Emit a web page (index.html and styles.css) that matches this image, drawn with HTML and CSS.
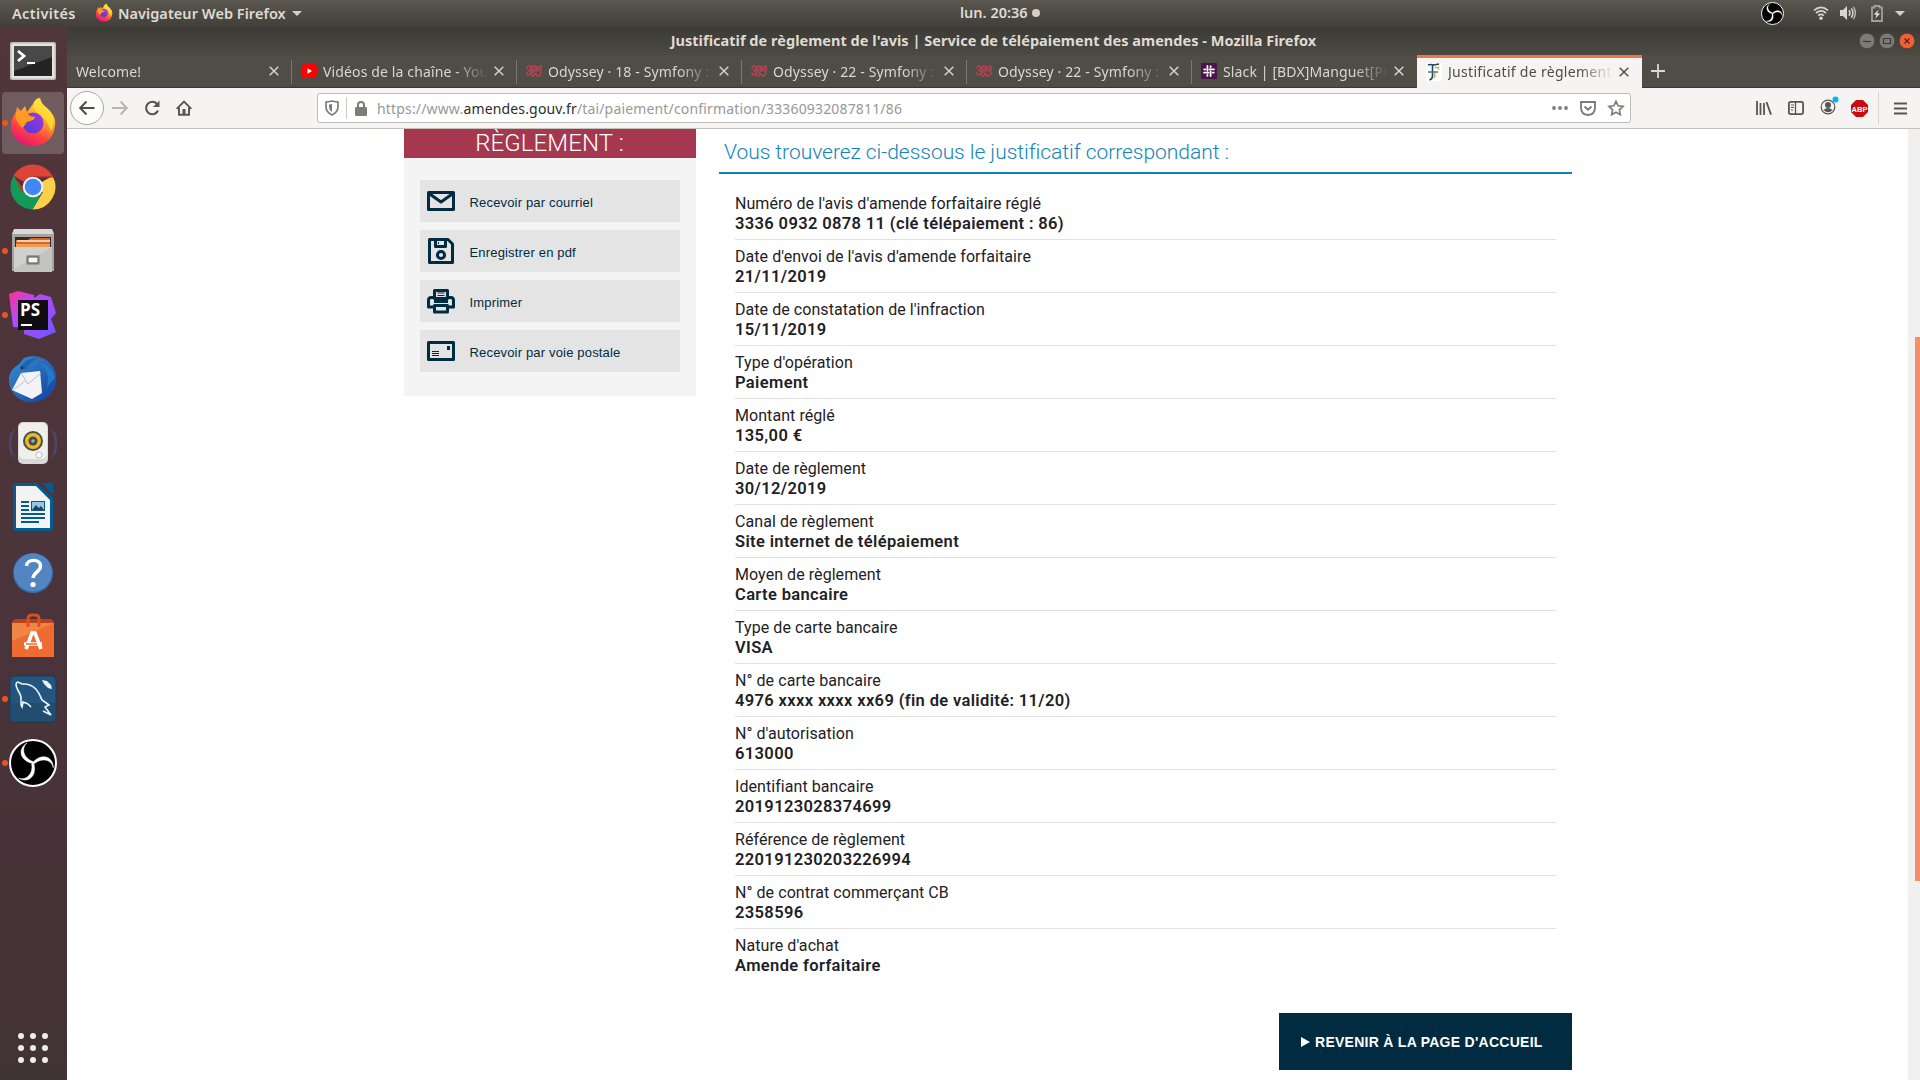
FILE: index.html
```html
<!DOCTYPE html>
<html lang="fr">
<head>
<meta charset="utf-8">
<title>Justificatif de règlement de l'avis</title>
<link rel="stylesheet" href="styles.css">
</head>
<body>
<header class="panel">
  <span class="activities">Activités</span>
  <svg class="panel-fox" width="18" height="18" viewBox="0 0 48 48"><use href="#fox"/></svg>
  <span class="appname">Navigateur Web Firefox</span>
  <span class="caret"></span>
  <span class="clock">lun. 20:36<i class="clock-dot"></i></span>
  <div class="tray">
    <svg width="23" height="23" viewBox="0 0 48 48"><use href="#obs"/></svg>
    <svg class="t-wifi" width="16" height="16" viewBox="0 0 16 16" fill="none" stroke="#d8d5cf" stroke-width="1.7"><path d="M1 5.4Q8-.8 15 5.4M3 8Q8 3.6 13 8M5.2 10.6Q8 8.2 10.8 10.6"/><circle cx="8" cy="13.3" r="1.700" fill="#d8d5cf" stroke="none"/></svg>
    <svg class="t-vol" width="16" height="16" viewBox="0 0 16 16" fill="none" stroke="#d8d5cf" stroke-width="1.500"><path d="M0 5h3l4-4v14l-4-4H0z" fill="#d8d5cf" stroke="none"/><path d="M9 5.2q2 2.8 0 5.6M11.3 3.4q3.2 4.6 0 9.2"/><path d="M13.4 1.8q4 6.2 0 12.4" stroke="#b5b2ab"/></svg>
    <svg class="t-bat" width="12" height="17" viewBox="0 0 12 17"><path d="M3.5 2.5V1h5v1.500h2.500V16H1V2.500z" fill="none" stroke="#a19e97" stroke-width="1.800"/><path d="M7.700 4.500 2.800 9.800h2.800l-1.400 4 5-5.300H6.300z" fill="#e5e3de"/></svg>
    <span class="caret"></span>
  </div>
</header>
<div class="desktop">
  <nav class="dock">
    <div class="app low"><svg width="48" height="48" viewBox="0 0 48 48"><rect x="1" y="5" width="46" height="38" rx="2" fill="#bcbcba"/><rect x="2.500" y="6.500" width="43" height="35" rx="1" fill="#e4e4e2"/><rect x="5" y="9" width="38" height="30" fill="#242424"/><path d="M5 9h38v11L5 34z" fill="#484848"/><path d="m9 14 6 5-6 5" fill="none" stroke="#fff" stroke-width="2.800"/><path d="M18 26h8" stroke="#fff" stroke-width="2"/></svg></div>
    <div class="app current run"><svg width="48" height="48" viewBox="0 0 48 48"><defs>
      <linearGradient id="gf" x1=".8" y1="0" x2=".3" y2="1"><stop offset="0" stop-color="#fff44f"/><stop offset=".4" stop-color="#ffa52a"/><stop offset=".7" stop-color="#ff453d"/><stop offset="1" stop-color="#e8127c"/></linearGradient>
      <linearGradient id="gp" x1="0" y1="1" x2="1" y2="0"><stop offset="0" stop-color="#4a3ad8"/><stop offset="1" stop-color="#a838e0"/></linearGradient>
      <g id="fox"><path d="M24 5c1-3 4-6 7-6 1 6 5 8 9 12 5 5 7 10 6 16-1 12-10 20-22 20S2 38 2 27c0-7 3-11 5-14l1-5 4 4 4-5 2 6z" fill="url(#gf)"/><path d="M31-1c1 6 5 8 9 12 5 5 6 15 2 21-3-8-6-13-12-17-4-3-7-8-5-11 1-2 3-5 6-5z" fill="#ffde36" opacity=".8"/><circle cx="24" cy="24" r="10.500" fill="url(#gp)"/><path d="M7 13c6-2 10-1 14 4l5 1c0 3-5 4-8 5-2 2-3 5-5 6-5-5-7-10-6-16z" fill="#ff9a23"/></g></defs><use href="#fox"/></svg></div>
    <div class="app"><svg width="48" height="48" viewBox="0 0 48 48"><path d="M24 24 4.500 12.800A22.500 22.500 0 0 1 43.500 13L24 13z" fill="#dc4437"/><path d="m24 24 19.500-11A22.500 22.500 0 0 1 23.500 46.500L34 29z" fill="#fdd04a"/><path d="M24 24 33 30 23.500 46.500A22.500 22.500 0 0 1 4.500 12.800L15 29z" fill="#129b58"/><path d="M24 13h19.500l.8 1.500H27zM4.500 12.800 14 30l2-3z" fill="#b9342e"/><circle cx="24" cy="24" r="10.300" fill="#f2f2f2"/><circle cx="24" cy="24" r="8.300" fill="#4285f4"/></svg></div>
    <div class="app run"><svg width="48" height="48" viewBox="0 0 48 48"><path d="M5 2h38l2 5H3z" fill="#d8d8d6"/><path d="M3 7h42v37H3z" fill="#a4a4a2"/><path d="M6 10h36v13H6z" fill="#322a27"/><path d="M7 13h12l3-2h19v10H7z" fill="#dc6428"/><path d="M8 14h33" stroke="#fff0d8" stroke-width="1.500"/><path d="M7 17h34v5H7z" fill="#f09b50"/><path d="M5 20h38v25H5z" fill="#c3c3c0"/><path d="M5 20h38L5 42z" fill="#d0d0cd"/><rect x="17" y="28" width="14" height="10" rx="2" fill="#999"/><rect x="19" y="30" width="10" height="6" fill="#f4f4f4" stroke="#555"/></svg></div>
    <div class="app run"><svg width="48" height="48" viewBox="0 0 48 48"><defs><linearGradient id="ps" x2="1" y2="1"><stop offset="0" stop-color="#ff318c"/><stop offset=".35" stop-color="#b74af7"/><stop offset="1" stop-color="#6b57ff"/></linearGradient></defs><path d="m0 3 9-3 16 4v3l6-4 11 3 5 16-5 6 5 13-17 7-15-5v-6L4 36z" fill="url(#ps)"/><path d="M9 9h30v30H9z" fill="#100e12"/><text x="11" y="25" class="ps-text">PS</text><path d="M12 34h11" stroke="#fff" stroke-width="2"/></svg></div>
    <div class="app"><svg width="48" height="48" viewBox="0 0 48 48"><defs><linearGradient id="tb" x2="1" y2="1"><stop offset="0" stop-color="#3b8fd4"/><stop offset="1" stop-color="#123e9c"/></linearGradient></defs><path d="M15 3C30-3 45 7 47 19c2 16-8 27-22 28C10 49-1 36 0 23 1 15 6 12 10 9z" fill="url(#tb)"/><path d="M29 8c8 5 12 12 9 24l8-9c-1-8-7-15-17-15z" fill="#2379c8"/><path d="m12 18 19-2 2 22-10 6-20-9z" fill="#f3f3f7"/><path d="m12 18 7 11 13-11M4 35l12-9" fill="none" stroke="#bbbdcb"/><path d="M11 12q6-9 18-9-9 4-12 12z" fill="#1f65ad"/><circle cx="13" cy="13" r="1.500" fill="#172f5c"/></svg></div>
    <div class="app"><svg width="48" height="48" viewBox="0 0 48 48"><path d="M5 10q-7 15 0 29M43 10q7 15 0 29M2 13q-3 11 0 22M46 13q3 11 0 22" fill="none" stroke="#4b4766" stroke-width="1.500"/><rect x="9" y="3" width="30" height="42" rx="5" fill="#d8d8d5"/><rect x="10" y="4" width="28" height="36" rx="5" fill="#efefec"/><circle cx="24" cy="22" r="10" fill="#4b4b49"/><circle cx="24" cy="22" r="8" fill="#e5bd29"/><circle cx="24" cy="22" r="4.500" fill="#4a4a48"/><circle cx="24" cy="22" r="1.800" fill="#aaa"/><circle cx="30" cy="36" r="3" fill="#fff" stroke="#bbb"/></svg></div>
    <div class="app"><svg width="48" height="48" viewBox="0 0 48 48"><path d="M4 2q0-2 2-2h22l16 15v31q0 2-2 2H6q-2 0-2-2z" fill="#045b91"/><path d="M7 3h20l14 14v28H7z" fill="#f3f3f1"/><path d="M33 0h9q2 0 2 2v10z" fill="#045b91"/><path d="M12 19h8M12 23h8M12 27h8M12 31h24M12 35h24M12 39h18" stroke="#045b91" stroke-width="1.800"/><rect x="22.500" y="18.500" width="13" height="9" fill="#8dc7ea" stroke="#045b91"/><path d="m23 27 4-5 3 3 2-2 3 4z" fill="#353c43"/></svg></div>
    <div class="app low"><svg width="48" height="48" viewBox="0 0 48 48"><circle cx="24" cy="24" r="20" fill="#356da7"/><circle cx="24" cy="23.500" r="19" fill="#5385c2"/><path d="M17.500 17c0-7 14-8 14 0 0 6-7 6-7.500 12" fill="none" stroke="#fff" stroke-width="3.400"/><circle cx="24" cy="35.500" r="2.600" fill="#fff"/></svg></div>
    <div class="app low"><svg width="48" height="48" viewBox="0 0 48 48"><path d="m3 9 3-3h36l3 3v6H3z" fill="#b94319"/><path d="M3 10h42v34H3z" fill="#ee6c31"/><path d="M3 10h42L3 28z" fill="#f08643"/><path d="M19 14V6q0-4 4-4h3q4 0 4 4v8" fill="none" stroke="#dc4f20" stroke-width="3"/><path d="m17 36 6-16h3l6 16M15 31h18" fill="none" stroke="#fff" stroke-width="3.600"/><path d="M17 31h11" stroke="#ed6b31" stroke-width="1.500"/></svg></div>
    <div class="app run"><svg width="48" height="48" viewBox="0 0 48 48"><rect x="1" y="1" width="46" height="46" rx="4" fill="#24557f" stroke="#173b59"/><path d="M1 28h46v15q0 4-4 4H5q-4 0-4-4z" fill="#204768" opacity=".6"/><path d="M22 32c-4-5-4-3-8-5l-1 5c-3-4 1-8-2-13C8 14 5 8 9 7l4 2c13-1 17 9 20 16l7 5-4 2 6 8-8-4" fill="none" stroke="#e7f5fc" stroke-width="1.600"/><path d="m33 5 5 1 4 4 1 4-4-1-4-4z" fill="#e7f5fc"/></svg></div>
    <div class="app run"><svg width="48" height="48" viewBox="0 0 48 48"><g id="obs"><circle cx="24" cy="24" r="23" fill="#020202" stroke="#fff" stroke-width="2"/><path id="blade" d="M18 4C12 9 14 19 24 22.500V24.500C11 22 8 10 18 4z" fill="#fff" stroke="#fff" stroke-width=".5"/><use href="#blade" transform="rotate(120 24 24)"/><use href="#blade" transform="rotate(240 24 24)"/></g></svg></div>
    <svg class="grid" width="32" height="32" viewBox="0 0 32 32" fill="#f0eeec"><circle cx="4" cy="4" r="3"/><circle cx="16" cy="4" r="3"/><circle cx="28" cy="4" r="3"/><circle cx="4" cy="16" r="3"/><circle cx="16" cy="16" r="3"/><circle cx="28" cy="16" r="3"/><circle cx="4" cy="28" r="3"/><circle cx="16" cy="28" r="3"/><circle cx="28" cy="28" r="3"/></svg>
  </nav>
  <div class="window">
    <div class="titlebar"><span class="wtitle">Justificatif de règlement de l'avis | Service de télépaiement des amendes - Mozilla Firefox</span>
      <div class="wbtns"><svg width="16" height="16" viewBox="0 0 16 16"><circle cx="8" cy="8" r="7.800" fill="#7c7a73" stroke="#3a3935" stroke-width=".6"/><path d="M4 8.500h8" stroke="#3b3a36" stroke-width="1.200"/></svg><svg width="16" height="16" viewBox="0 0 16 16"><circle cx="8" cy="8" r="7.800" fill="#7c7a73" stroke="#3a3935" stroke-width=".6"/><path d="M4.500 5.500h7v5h-7z" fill="none" stroke="#3b3a36" stroke-width="1.200"/></svg><svg width="16" height="16" viewBox="0 0 16 16"><circle cx="8" cy="8" r="7.800" fill="#ee6137" stroke="#3a3935" stroke-width=".6"/><path d="m5.500 5.500 5 5m0-5-5 5" stroke="#5a2411" stroke-width="1.300"/></svg></div>
    </div>
    <div class="tabs">
      <div class="tab"><span class="tt">Welcome!</span><svg class="x" viewBox="0 0 10 10"><path d="m.7.7 8.600 8.600m0-8.600L.7 9.300"/></svg></div>
      <div class="tab"><svg class="fav" viewBox="0 0 16 16"><rect y="1" width="16" height="14" rx="4" fill="red"/><path d="m6.500 5.200 4.500 2.800-4.500 2.800z" fill="#fff"/></svg><span class="tt">Vidéos de la chaîne - You</span><svg class="x" viewBox="0 0 10 10"><path d="m.7.7 8.600 8.600m0-8.600L.7 9.300"/></svg></div>
      <div class="tab"><svg class="fav" viewBox="0 0 16 16"><g id="ody" fill="none" stroke="#bd4155" stroke-width="1.300"><path d="M1 6q0-3 2-3t2 3v3q0 1 1 1V5q0-2 2-2t2 2v4M13 9V5q0-2 1-2 2 0 1 4v3q-1 3-3 3t-2-3M1 9q0 4 2 3l2-2q0 3 2 3t2-3M3 6v3M8 5v5M11 3v5"/></g></svg><span class="tt">Odyssey · 18 - Symfony : C</span><svg class="x" viewBox="0 0 10 10"><path d="m.7.7 8.600 8.600m0-8.600L.7 9.300"/></svg></div>
      <div class="tab"><svg class="fav" viewBox="0 0 16 16"><use href="#ody"/></svg><span class="tt">Odyssey · 22 - Symfony : I</span><svg class="x" viewBox="0 0 10 10"><path d="m.7.7 8.600 8.600m0-8.600L.7 9.300"/></svg></div>
      <div class="tab"><svg class="fav" viewBox="0 0 16 16"><use href="#ody"/></svg><span class="tt">Odyssey · 22 - Symfony : I</span><svg class="x" viewBox="0 0 10 10"><path d="m.7.7 8.600 8.600m0-8.600L.7 9.300"/></svg></div>
      <div class="tab last"><svg class="fav" viewBox="0 0 16 16"><path d="M0 0h16v16H0z" fill="#4a154b"/><path d="M6.400 3v4.500M3.200 6.400h1M9.600 8.500V13M11.800 9.600h1M8.500 6.400H13M9.600 3.200v1M3 9.600h4.500M6.400 11.800v1" stroke="#fff" stroke-width="1.800" stroke-linecap="round"/></svg><span class="tt">Slack | [BDX]Manguet[PH</span><svg class="x" viewBox="0 0 10 10"><path d="m.7.7 8.600 8.600m0-8.600L.7 9.300"/></svg></div>
      <div class="tab active"><svg class="fav" viewBox="0 0 16 18"><path d="M0 0h16v18H0z" fill="#fff"/><path d="M2 2q2-1 6 0l5-1M6.500 2v11q0 3-3 4" fill="none" stroke="#21455f" stroke-width="1.600"/><path d="M2 9h10" stroke="#367b91" stroke-width="1.500"/><path d="M8.500 4.500h4v2M8.700 10v5" fill="none" stroke="#e3ac35" stroke-width="1.500"/></svg><span class="tt">Justificatif de règlement</span><svg class="x" viewBox="0 0 10 10"><path d="m.7.7 8.600 8.600m0-8.600L.7 9.300"/></svg></div>
      <svg class="plus" width="14" height="14" viewBox="0 0 14 14"><path d="M7 0v14M0 7h14" stroke="#d9d7d2" stroke-width="1.800"/></svg>
    </div>
    <div class="toolbar">
      <div class="back"><svg width="16" height="16" viewBox="0 0 16 16" fill="none" stroke="#4c4c4a" stroke-width="2"><path d="M15.500 8H1.500M7.500 1.500 1.200 8l6.300 6.500"/></svg></div>
      <svg class="fwd" width="16" height="16" viewBox="0 0 16 16" fill="none" stroke="#b7b6b4" stroke-width="2"><path d="M0 8h14.500M8.500 1.500 14.800 8l-6.300 6.500"/></svg>
      <svg class="reload" width="16" height="16" viewBox="0 0 16 16" fill="none" stroke="#565654" stroke-width="2"><path d="M13 4A6.200 6.200 0 1 0 14 10.500"/><path d="M15.500.5v6.500H9z" fill="#565654" stroke="none"/></svg>
      <svg class="home" width="16" height="16" viewBox="0 0 16 16" fill="none" stroke="#565654" stroke-width="1.900"><path d="m.7 8.800 7.300-7.300 7.300 7.300M3 7.500v7.300h10V7.500"/><path d="M6.500 9h3v5h-3z" fill="#565654" stroke="none"/></svg>
      <div class="url">
        <svg class="shield" width="14" height="16" viewBox="0 0 14 16" fill="none" stroke="#7c7c7a" stroke-width="1.700"><path d="M7 1 13 2.200V7q0 5-6 8-6-3-6-8V2.200z"/><path d="M7 4v8q-3-2-3-5V4.500z" fill="#7c7c7a" stroke="none"/></svg>
        <i class="sep"></i>
        <svg class="lock" width="12" height="15" viewBox="0 0 12 15"><rect y="6" width="12" height="9" rx="1.200" fill="#7c7c7a"/><path d="M3 7V4q0-3 3-3t3 3v3" fill="none" stroke="#7c7c7a" stroke-width="2"/></svg>
        <span class="addr">https://www.<b>amendes.gouv.fr</b>/tai/paiement/confirmation/33360932087811/86</span>
        <svg class="dots" width="16" height="4" viewBox="0 0 16 4" fill="#7c7c7a"><circle cx="2" cy="2" r="1.900"/><circle cx="8" cy="2" r="1.900"/><circle cx="14" cy="2" r="1.900"/></svg>
        <svg class="pocket" width="16" height="15" viewBox="0 0 16 15" fill="none" stroke="#7c7c7a" stroke-width="1.900"><path d="M1 1h14v5.500q0 7-7 7.500-7-.5-7-7.500zM4.500 5.500 8 8.800l3.500-3.300"/></svg>
        <svg class="star" width="16" height="16" viewBox="0 0 16 16" fill="none" stroke="#7c7c7a" stroke-width="1.700"><path d="m8 1.300 2.100 4.500 4.900.6-3.600 3.400.9 4.900L8 12.300l-4.300 2.400.9-4.900L1 6.400l4.900-.6z"/></svg>
      </div>
      <div class="tools">
        <svg width="16" height="14" viewBox="0 0 16 14" fill="none" stroke="#565654" stroke-width="1.800"><path d="M1 0v14M4.500 2v12M8 2v12M10.500 1 15 13.600"/></svg>
        <svg width="16" height="14" viewBox="0 0 16 14" fill="none" stroke="#565654" stroke-width="1.800"><rect x=".9" y=".9" width="14.200" height="12.200" rx="1.500"/><path d="M7.500 1v12" stroke-width="1.300"/><path d="M3 4h3M3 6.500h3M3 9h2" stroke-width="1.100"/></svg>
        <svg class="acct" width="18" height="19" viewBox="0 0 18 19"><circle cx="8" cy="11" r="6.800" fill="none" stroke="#565654" stroke-width="1.200"/><circle cx="8" cy="9" r="3" fill="#565654"/><path d="M3.500 14q4.500-4 9 0-4 4.500-9 0z" fill="#565654"/><circle cx="15.500" cy="3.500" r="3" fill="#0ab0f3"/></svg>
        <svg class="abp" width="17" height="17" viewBox="0 0 17 17"><path d="M5 0h7l5 5v7l-5 5H5l-5-5V5z" fill="#c70d13"/><text x="8.500" y="11.500" text-anchor="middle">ABP</text></svg>
        <i class="toolsep"></i>
        <svg width="13" height="13" viewBox="0 0 13 13"><path d="M0 1.500h13M0 6.500h13M0 11.500h13" stroke="#565654" stroke-width="1.800"/></svg>
      </div>
    </div>
    <div class="page">
      <div class="content">
        <aside class="side">
          <h2>RÈGLEMENT :</h2>
          <ul>
            <li><svg width="28" height="28" viewBox="0 0 28 28" fill="none" stroke="#002b41" stroke-width="3" stroke-linejoin="round"><rect x="1.500" y="5.500" width="25" height="17"/><path d="m2 6.500 12 8.500 12-8.500"/></svg><span>Recevoir par courriel</span></li>
            <li><svg width="28" height="28" viewBox="0 0 28 28" fill="none" stroke="#002b41" stroke-width="3" stroke-linejoin="round"><path d="M2.500 2.500H21l4.500 4.500v18.500h-23z"/><path d="M8.500 3v6.500h10V3"/><circle cx="14" cy="18" r="3.600"/><path d="M11.500 5v2" stroke-width="1"/></svg><span>Enregistrer en pdf</span></li>
            <li><svg width="28" height="28" viewBox="0 0 28 28" fill="none" stroke="#002b41" stroke-width="3" stroke-linejoin="round"><path d="M7.500 11.500v-8h13v8zM7.500 18.500h13v6.500h-13z"/><path d="M7 10.500H4q-2.500 0-2.500 3v6.500H7m14-9.500h3q2.500 0 2.500 3v6.500H21M7 14.500h14"/><path d="M10.500 6h7M10.500 8.500h7" stroke-width="1"/></svg><span>Imprimer</span></li>
            <li><svg width="28" height="28" viewBox="0 0 28 28" fill="none" stroke="#002b41" stroke-width="3" stroke-linejoin="round"><rect x="1.500" y="5.500" width="25" height="17"/><path d="M5 14.500h7M5 16.500h7M5 18.500h7" stroke-width="1"/><path d="M20 9h3v4h-3z" fill="#002b41" stroke="none"/></svg><span>Recevoir par voie postale</span></li>
          </ul>
        </aside>
        <main class="main">
          <h1>Vous trouverez ci-dessous le justificatif correspondant :</h1>
          <dl>
            <div><dt>Numéro de l'avis d'amende forfaitaire réglé</dt><dd>3336 0932 0878 11 (clé télépaiement : 86)</dd></div>
            <div><dt>Date d'envoi de l'avis d'amende forfaitaire</dt><dd>21/11/2019</dd></div>
            <div><dt>Date de constatation de l'infraction</dt><dd>15/11/2019</dd></div>
            <div><dt>Type d'opération</dt><dd>Paiement</dd></div>
            <div><dt>Montant réglé</dt><dd>135,00 €</dd></div>
            <div><dt>Date de règlement</dt><dd>30/12/2019</dd></div>
            <div><dt>Canal de règlement</dt><dd>Site internet de télépaiement</dd></div>
            <div><dt>Moyen de règlement</dt><dd>Carte bancaire</dd></div>
            <div><dt>Type de carte bancaire</dt><dd>VISA</dd></div>
            <div><dt>N° de carte bancaire</dt><dd>4976 xxxx xxxx xx69 (fin de validité: 11/20)</dd></div>
            <div><dt>N° d'autorisation</dt><dd>613000</dd></div>
            <div><dt>Identifiant bancaire</dt><dd>2019123028374699</dd></div>
            <div><dt>Référence de règlement</dt><dd>220191230203226994</dd></div>
            <div><dt>N° de contrat commerçant CB</dt><dd>2358596</dd></div>
            <div><dt>Nature d'achat</dt><dd>Amende forfaitaire</dd></div>
          </dl>
          <a class="btn"><i></i><span>REVENIR À LA PAGE D'ACCUEIL</span></a>
        </main>
      </div>
      <div class="scroll"><i></i></div>
    </div>
  </div>
</div>
</body>
</html>
```
FILE: styles.css
```css
* { box-sizing: border-box; }
body { margin: 0; width: 1920px; height: 1080px; overflow: hidden; background: #fff; font-family: "Noto Sans", sans-serif; display: flex; flex-direction: column; }
svg { display: block; flex: none; overflow: visible; }
h1, h2, ul, dl, dd { margin: 0; padding: 0; }
span { white-space: nowrap; }
.panel { height: 27px; flex: none; display: flex; align-items: center; position: relative; background: linear-gradient(#5a574f, #403f3a); color: #dfdbd2; font-size: 14.500px; font-weight: 600; line-height: 25px; padding-bottom: 1px; }
.activities { width: 65px; margin-left: 12px; letter-spacing: .35px; }
.panel-fox { margin-left: 18px; }
.appname { width: 169px; margin-left: 5px; letter-spacing: .05px; }
.caret { border: 5px solid transparent; border-top-color: #d3d0ca; border-bottom: 0; margin-left: 5px; }
.clock { position: absolute; left: 960px; top: 0; display: flex; align-items: center; }
.clock-dot { width: 8px; height: 8px; border-radius: 50%; background: #d3d0ca; margin-left: 4px; }
.tray { margin-left: auto; display: flex; align-items: center; padding-right: 15px; }
.t-wifi { margin-left: 29px; }
.t-vol { margin-left: 11px; }
.t-bat { margin-left: 15px; }
.tray .caret { margin-left: 12px; }
.desktop { flex: 1; display: flex; min-height: 0; }
.dock { width: 67px; flex: none; background: linear-gradient(#51363b, #49333a 65%, #433236 94%, #3f3335); padding-top: 1px; display: flex; flex-direction: column; }
.app { height: 62px; width: 62px; margin: 0 0 2px 2px; display: flex; align-items: center; justify-content: center; position: relative; border-radius: 4px; flex: none; }
.low { padding-top: 3px; }
.current { background: #705b5e; }
.run::before { content: ""; position: absolute; left: 0; top: 28px; width: 6px; height: 6px; border-radius: 50%; background: #e95420; }
.ps-text { font: 700 17px "Open Sans", sans-serif; fill: #fff; }
.grid { margin: auto 0 16px 17px; }
.window { flex: 1; display: flex; flex-direction: column; min-width: 0; }
.titlebar { height: 28px; flex: none; background: linear-gradient(#3b3a36, #4c4a43); display: flex; align-items: center; justify-content: center; position: relative; color: #dfdbd2; font-size: 14.500px; font-weight: 700; padding-bottom: 2px; letter-spacing: .03px; }
.wbtns { position: absolute; right: 5px; top: 6px; display: flex; gap: 4px; }
.tabs { height: 33px; flex: none; display: flex; background: #504d46; border-bottom: 1px solid #3a3833; }
.tab { width: 225px; flex: none; display: flex; align-items: center; padding: 0 13px 0 9px; position: relative; color: #d9d7d2; font-size: 14px; letter-spacing: .13px; }
.tab::after { content: ""; position: absolute; right: 0; top: 5px; height: 24px; width: 1px; background: #7a7872; }
.tab.last::after, .tab.active::after { display: none; }
.fav { width: 16px; height: 16px; margin-right: 6px; }
.tt { flex: 1; overflow: hidden; margin-right: 6px; -webkit-mask-image: linear-gradient(90deg, #000 calc(100% - 34px), transparent); mask-image: linear-gradient(90deg, #000 calc(100% - 34px), transparent); }
.x { width: 10px; height: 10px; fill: none; stroke: currentColor; stroke-width: 1.400; }
.active { background: #f5f4f2; color: #4c4c4a; border-top: 3px solid #f0764a; height: 33px; padding-bottom: 3px; letter-spacing: .3px; }
.active .fav { height: 18px; }
.plus { margin: 9px 0 0 9px; }
.toolbar { height: 41px; flex: none; background: #f5f4f2; border-bottom: 1px solid #c4c1bd; display: flex; align-items: center; padding-left: 3px; }
.back { width: 34px; height: 34px; border: 1px solid #aaa8a5; border-radius: 50%; background: #fcfcfb; display: flex; align-items: center; justify-content: center; }
.fwd { margin-left: 8px; }
.reload, .home { margin-left: 16px; }
.url { width: 1314px; height: 30px; margin-left: 125px; background: #fff; border: 1px solid #c0bebb; border-radius: 3px; display: flex; align-items: center; padding: 0 6px 0 7px; font-size: 14px; color: #999896; }
.sep { width: 1px; height: 22px; background: #c7c5c2; margin: 0 8px 0 7px; }
.addr { margin-left: 10px; flex: 1; letter-spacing: .16px; }
.addr b { color: #2c2c2a; font-weight: 400; }
.pocket { margin-left: 12px; }
.star { margin-left: 12px; }
.tools { display: flex; align-items: center; margin-left: auto; padding-right: 13px; gap: 16px; }
.acct { margin: -6px -1px 0 0; }
.abp { margin-left: -2px; }
.abp text { font: 700 7.500px "Liberation Sans", sans-serif; fill: #fff; }
.toolsep { width: 1px; height: 34px; background: #d8d6d3; margin: 0 -1px 0 -6px; }
.page { flex: 1; display: flex; background: #fff; min-height: 0; }
.content { flex: 1; display: flex; align-items: flex-start; padding-left: 337px; }
.scroll { width: 12px; background: #f1f0ee; padding: 208px 0 0 7px; }
.scroll i { display: block; height: 544px; background: #f48d68; }
.side { width: 292px; height: 267px; background: #f4f4f4; }
.side h2 { height: 29px; background: #a5374f; color: #fff; text-align: center; font: 300 24px/29px Roboto, sans-serif; overflow: hidden; letter-spacing: .1px; padding-right: 1px; }
.side ul { list-style: none; padding: 22px 16px; display: flex; flex-direction: column; gap: 8px; }
.side li { height: 42px; background: #e4e4e4; display: flex; align-items: center; padding-left: 7px; color: #002b41; font: 13px "Liberation Sans", sans-serif; letter-spacing: .17px; }
.side li span { margin: 2px 0 0 14.500px; }
.main { width: 853px; margin-left: 23px; display: flex; flex-direction: column; }
h1 { height: 45px; border-bottom: 2px solid #0d80b4; color: #1185b9; font: 300 21px/46px Roboto, sans-serif; padding-left: 5px; white-space: nowrap; letter-spacing: -.04px; }
dl { padding: 13px 16px 0; font: 16px/20px Roboto, sans-serif; color: #1e2126; }
dl div { height: 53px; padding-top: 7px; border-bottom: 1px solid #e2e2e2; }
dl div:last-child { border: 0; }
dt { letter-spacing: .06px; }
dd { font-size: 16.500px; font-weight: 600; letter-spacing: .36px; }
.btn { align-self: flex-end; width: 293px; height: 57px; margin-top: 31px; background: #002b40; color: #fff; display: flex; align-items: center; padding-left: 22px; font: 700 14px "Liberation Sans", sans-serif; letter-spacing: .27px; }
.btn i { border: 5.500px solid transparent; border-left: 9px solid #fff; border-right: 0; margin-right: 5px; }
```
